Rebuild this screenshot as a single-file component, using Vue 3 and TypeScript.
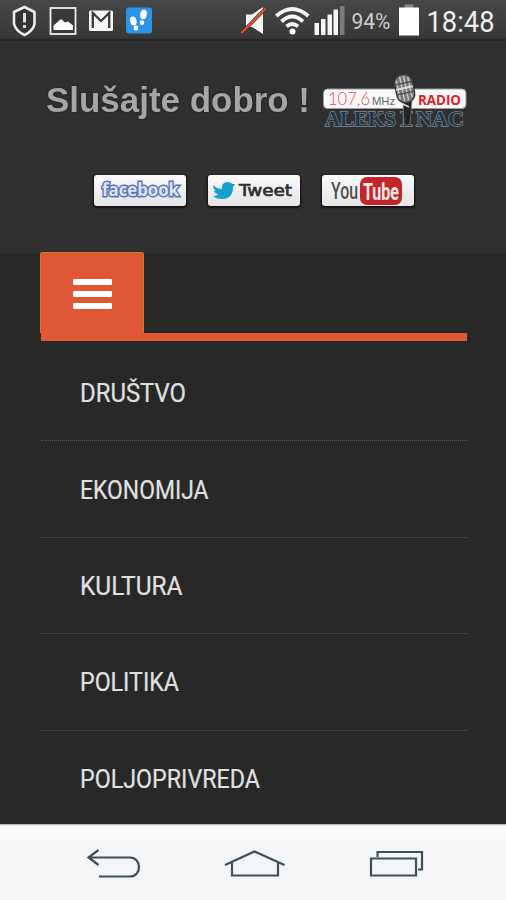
<script setup lang="ts">
interface MenuItem {
  label: string
  width: number
}

const menuItems: MenuItem[] = [
  { label: 'DRUŠTVO', width: 106 },
  { label: 'EKONOMIJA', width: 128.5 },
  { label: 'KULTURA', width: 102.5 },
  { label: 'POLITIKA', width: 99 },
  { label: 'POLJOPRIVREDA', width: 180 },
]
</script>

<template>
  <div class="screen">
    <div class="status">
      <svg width="506" height="41" viewBox="0 0 506 41">
        <path d="M24.5 7 L34.5 12 V24 Q33 31 24.5 35 Q16 31 14 24 V12 Z" fill="#333" stroke="#eee" stroke-width="2.6" stroke-linejoin="round" />
        <path d="M24.5 13V22.500M24.500 25V28" stroke="#ddd" stroke-width="3" />
        <rect x="50.500" y="8" width="25" height="26" fill="#393939" stroke="#eee" stroke-width="1.800" />
        <path d="M53.500 30V25.500L57 22.500L61 19L65 22.500L68 21.500L73 25.500V30Z" fill="#fff" />
        <rect x="89" y="10.500" width="24" height="20.500" rx="1.500" fill="#f5f5f5" />
        <path d="M92.800 28V13L101 21L109.200 13V28" fill="none" stroke="#3a3a3a" stroke-width="2.300" />
        <rect x="126" y="7.500" width="26" height="26" rx="3" fill="#2b96e8" />
        <g fill="#fff">
          <ellipse cx="143.500" cy="14.500" rx="3.300" ry="4.800" transform="rotate(10 143.500 14.500)" />
          <ellipse cx="142" cy="22.500" rx="2.200" ry="2.600" />
          <ellipse cx="133.300" cy="21" rx="3.200" ry="4.600" transform="rotate(-15 133.300 21)" />
          <ellipse cx="136" cy="28" rx="2.300" ry="2.600" />
        </g>
        <path d="M246 14.500H252L263 7V34L252 27H246Z" fill="#f4f4f4" />
        <path d="M241.500 33L265.500 8.500" stroke="#353535" stroke-width="3.400" />
        <path d="M241.500 33L265.500 8.500" stroke="#f05030" stroke-width="2" />
        <g fill="none" stroke="#f4f4f4" stroke-width="3.800">
          <path d="M276.300 16Q292.300 2 308.300 16" />
          <path d="M281.500 21.500Q292.300 11.500 303 21.500" />
          <path d="M286.500 26.500Q292.300 21.500 298 26.500" />
        </g>
        <circle cx="292.500" cy="31.500" r="3" fill="#fff" />
        <g fill="#f6f6f6">
          <rect x="314.500" y="23" width="4.500" height="12" />
          <rect x="321" y="19" width="4.500" height="16" />
          <rect x="327.500" y="14.500" width="4.500" height="20.500" />
          <rect x="333.500" y="9.500" width="4.500" height="25.500" />
        </g>
        <rect x="340" y="6" width="4.500" height="29" fill="#7b7b7b" />
        <text x="351.500" y="29" class="roboto" font-size="21.500" fill="#ccc" textLength="39" lengthAdjust="spacingAndGlyphs">94%</text>
        <rect x="404.500" y="4.500" width="9" height="4" fill="#8a8a8a" />
        <rect x="399" y="7.500" width="20" height="28" fill="#fff" />
        <text x="426.500" y="31.500" class="roboto" font-size="29" fill="#eee" textLength="68" lengthAdjust="spacingAndGlyphs">18:48</text>
      </svg>
    </div>

    <header class="header">
      <div class="brand">
        <svg class="title" width="266" height="60" viewBox="0 0 266 60">
          <text x="1" y="41.500" class="sans" font-size="34.500" font-weight="700" fill="#a6a6a6" textLength="264" lengthAdjust="spacingAndGlyphs">Slušajte dobro !</text>
        </svg>
        <svg class="logo" width="148" height="60" viewBox="320 70 148 60">
          <rect x="323.500" y="89" width="142.500" height="19.500" rx="4" fill="#f8f8f8" stroke="#999" />
          <text x="328" y="105" class="lato" font-size="17" font-weight="300" fill="#e64b59" textLength="42" lengthAdjust="spacingAndGlyphs">107,6</text>
          <text x="372" y="105" class="sans" font-size="11" fill="#666" textLength="23" lengthAdjust="spacingAndGlyphs">MHz</text>
          <text x="418" y="105" class="open" font-size="15" font-weight="700" fill="#e41c2b" textLength="43" lengthAdjust="spacingAndGlyphs">RADIO</text>
          <g class="place" font-size="21" font-weight="700">
            <text x="325" y="126" textLength="71" lengthAdjust="spacingAndGlyphs">ALEKS</text>
            <text x="400" y="126" textLength="13" lengthAdjust="spacingAndGlyphs">I</text>
            <text x="416" y="126" textLength="48" lengthAdjust="spacingAndGlyphs">NAC</text>
          </g>
          <path d="M403 99H412L410 124Q406 127 404 123Z" fill="#202329" stroke="#777" stroke-width=".7" />
          <path d="M403 104L409 107" stroke="#ddd" stroke-width="1.500" />
          <g transform="rotate(-12 405 88)">
            <rect x="395.500" y="74.500" width="18" height="28" rx="8" fill="#777" stroke="#3c3c3c" stroke-width="1.300" />
            <path d="M398 79V98M402 76V101M406 76V101M410 78V98" stroke="#c4c4c4" stroke-width="1.500" />
            <path d="M396 83H413M396 93H413" stroke="#4b4b4b" stroke-width="1.300" />
            <path d="M396 88H413" stroke="#ddd" stroke-width="2" />
          </g>
        </svg>
      </div>

      <div class="social">
        <a class="badge">
          <svg width="92" height="31" viewBox="0 0 92 31">
            <text x="8" y="21" class="facebook" font-size="18" font-weight="700" textLength="77" lengthAdjust="spacingAndGlyphs">facebook</text>
          </svg>
        </a>
        <a class="badge">
          <svg width="92" height="31" viewBox="0 0 92 31">
            <path d="M5 10Q9 14 14 14Q13 8 19 7Q23 7 24 9L27 9L25 12Q25 24 14 24Q8 24 5 21Q9 21 10 19Q6 18 6 16L8 16Q5 14 5 10Z" fill="#159fcd" />
            <text x="31" y="20.500" class="tweet" font-size="16" textLength="53" lengthAdjust="spacingAndGlyphs">Tweet</text>
          </svg>
        </a>
        <a class="badge youtube">
          <svg width="28" height="31" viewBox="0 0 28 31">
            <text x="0" y="24" class="roboto" font-size="24" font-weight="500" fill="#505050" textLength="27" lengthAdjust="spacingAndGlyphs">You</text>
          </svg>
          <span class="tube">
            <svg width="42" height="28" viewBox="0 0 42 28">
              <text x="3" y="22.500" class="roboto" font-size="23" font-weight="700" fill="#f8e9e9" textLength="36" lengthAdjust="spacingAndGlyphs">Tube</text>
            </svg>
          </span>
        </a>
      </div>
    </header>

    <main class="content">
      <button class="toggle" aria-label="Meni">
        <span></span><span></span><span></span>
      </button>
      <ul class="menu">
        <li v-for="item in menuItems" :key="item.label">
          <svg width="200" height="40" viewBox="0 0 200 40">
            <text x="0" y="29" class="label" font-size="25.200" :textLength="item.width" lengthAdjust="spacingAndGlyphs">{{ item.label }}</text>
          </svg>
        </li>
      </ul>
    </main>

    <footer class="keys">
      <svg width="506" height="76" viewBox="0 824 506 76" fill="none" stroke="#3c505c" stroke-width="2.200">
        <path d="M98.500 850L88.500 857.500L98.500 865M89 857.500H130C142 857.500 142 876.500 130 876.500H99" />
        <path d="M225 865L254.500 851.500L284.500 865M232 863V875.500H278V863" />
        <path d="M377.500 857V852H422V869.500H418M371 858.500H416V875.500H371Z" />
      </svg>
    </footer>
  </div>
</template>

<style>
body {
  margin: 0;
}
</style>

<style scoped>
.screen {
  width: 506px;
  height: 900px;
  display: flex;
  flex-direction: column;
  overflow: hidden;
  background: #282828;
}
svg {
  display: block;
}
.roboto {
  font-family: Roboto, sans-serif;
}
.sans {
  font-family: 'Liberation Sans', sans-serif;
}
.lato {
  font-family: Lato, sans-serif;
}
.open {
  font-family: 'Open Sans', sans-serif;
}
.tweet {
  font-family: 'DejaVu Sans', sans-serif;
  fill: #303030;
  stroke: #303030;
  stroke-width: 0.7px;
}
.status {
  height: 41px;
  flex: none;
  box-sizing: border-box;
  background: linear-gradient(#474747, #383838 38px, #202020 40px, #292929);
}
.header {
  height: 212px;
  flex: none;
  box-sizing: border-box;
  padding-top: 29px;
  background: #303030;
}
.brand {
  display: flex;
  gap: 9px;
  padding-left: 45px;
}
.title {
  filter: drop-shadow(0 0 1px #151515);
}
.place {
  font-family: 'Liberation Serif', serif;
  fill: #19364d;
  stroke: #858b90;
  stroke-width: 1.3px;
  paint-order: stroke;
}
.social {
  display: flex;
  gap: 22px;
  padding: 45px 0 0 94px;
}
.badge {
  width: 92px;
  height: 31px;
  border-radius: 3px;
  background: linear-gradient(#fafafa, #e4e4e4);
  box-shadow: 0 1px 2px 1px #111;
}
.youtube {
  display: flex;
  align-items: center;
  gap: 1px;
  box-sizing: border-box;
  padding-left: 9px;
}
.tube {
  width: 42px;
  height: 28px;
  border-radius: 7px;
  background: #c2262c;
}
.facebook {
  font-family: 'Open Sans', sans-serif;
  fill: #dce4f4;
  stroke: #5873b5;
  stroke-width: 3px;
  paint-order: stroke;
}
.content {
  height: 572px;
  margin-top: -1px;
  flex: none;
  box-sizing: border-box;
  padding: 0 39px 0 40px;
}
.toggle {
  display: flex;
  flex-direction: column;
  align-items: center;
  justify-content: center;
  gap: 6px;
  width: 104px;
  height: 82px;
  margin: 0;
  padding: 2px 0 0;
  border: 1px solid #c98218;
  border-radius: 2px;
  background: #df5734;
}
.toggle span {
  width: 39px;
  height: 6px;
  border-radius: 1px;
  background: #fff;
}
.menu {
  margin: -1px 0 0 1px;
  padding: 4px 0 0;
  list-style: none;
  border-top: 8px solid #df5734;
}
.menu li {
  height: 95.400px;
  padding-left: 39px;
  border-bottom: 1px dotted #555;
  display: flex;
  align-items: center;
}
.menu li svg {
  margin-top: 1px;
}
.menu li:last-child {
  border-bottom: 0;
}
.label {
  font-family: Roboto, 'Noto Sans', sans-serif;
  fill: #e0e0e0;
  stroke: #e0e0e0;
  stroke-width: 0.2px;
}
.keys {
  height: 76px;
  flex: none;
  background: linear-gradient(#aaa 0, #fbfbfb 2px, #f4f5f6 25px);
}
</style>
